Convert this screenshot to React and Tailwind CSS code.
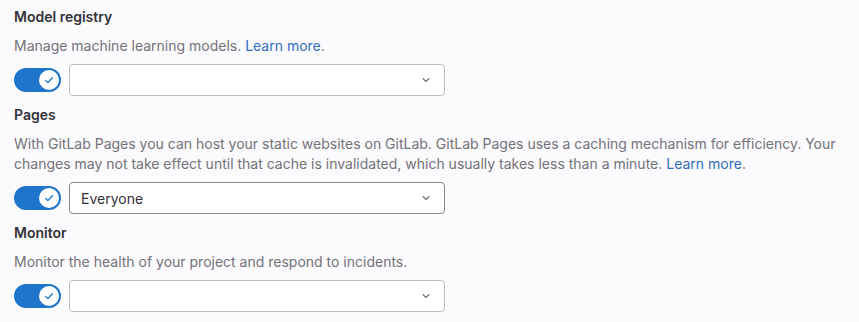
import { ChevronDown } from 'lucide-react'

function Toggle() {
  return (
    <button
      type="button"
      className="relative flex h-[24px] w-[47px] shrink-0 items-center justify-end rounded-full bg-[#1f75cb] pr-[2px]"
    >
      <span className="flex h-[20px] w-[20px] items-center justify-center rounded-full bg-white">
        <svg width="12" height="12" viewBox="0 0 16 16" fill="none">
          <path d="M3.5 8.5l3 3 6-6.5" stroke="#1f75cb" strokeWidth="1.8" strokeLinecap="round" strokeLinejoin="round" />
        </svg>
      </span>
    </button>
  )
}

function Select({ value, dark }) {
  return (
    <div
      className={
        'flex h-[32px] w-[376px] items-center justify-between rounded-[4px] border bg-white pl-[11px] pr-[12px] text-[14px] text-[#333238] ' +
        (dark ? 'border-[#89888d]' : 'border-[#bfbfc3]')
      }
    >
      <span>{value}</span>
      <ChevronDown size={12} strokeWidth={2.2} className="text-[#737278]" />
    </div>
  )
}

function Section({ title, children, value, dark }) {
  return (
    <section>
      <h4 className="mb-[9px] text-[14px] font-semibold leading-[20px] text-[#333238]">{title}</h4>
      <p className="mb-[8px] text-[14px] leading-[20px] text-[#737278]">{children}</p>
      <div className="flex items-center gap-[8px]">
        <Toggle />
        <Select value={value} dark={dark} />
      </div>
    </section>
  )
}

function LearnMore() {
  return (
    <span>
      <a className="text-[#2f6fbf]">Learn more</a>.
    </span>
  )
}

export default function App() {
  return (
    <div
      className="flex min-h-[322px] w-[859px] flex-col gap-[9px] bg-[#fbfafd] px-[14px] pt-[7px]"
      style={{ fontFamily: 'Inter, "Noto Sans", sans-serif' }}
    >
      <Section title="Model registry">
        Manage machine learning models. <LearnMore />
      </Section>
      <Section title="Pages" value="Everyone" dark>
        With GitLab Pages you can host your static websites on GitLab. GitLab Pages uses a caching mechanism for
        efficiency. Your changes may not take effect until that cache is invalidated, which usually takes less than a
        minute. <LearnMore />
      </Section>
      <Section title="Monitor">Monitor the health of your project and respond to incidents.</Section>
    </div>
  )
}
